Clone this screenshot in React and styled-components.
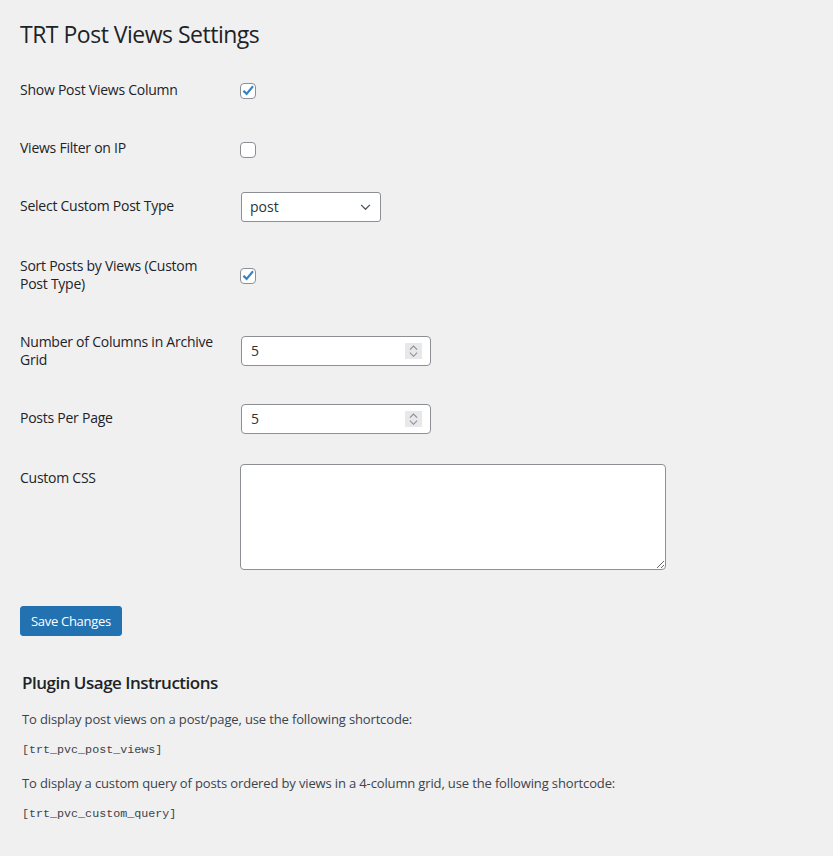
import React from 'react';
import styled, { createGlobalStyle } from 'styled-components';

const GlobalStyle = createGlobalStyle`
  html, body {
    margin: 0;
    padding: 0;
    background: #f0f0f1;
  }
  body {
    color: #1d2327;
    font-family: "Open Sans", "Noto Sans", sans-serif;
    font-size: 13px;
  }
`;

const Wrap = styled.div`
  padding: 11px 20px 30px 20px;
  min-height: 815px;
`;

const Title = styled.h1`
  font-size: 23px;
  font-weight: 400;
  line-height: 1.3;
  margin: 0;
  padding: 9px 0 4px;
  letter-spacing: -0.5px;
`;

const FormTable = styled.div`
  margin-top: 7px;
  display: flex;
  flex-direction: column;
`;

const Row = styled.div`
  display: grid;
  grid-template-columns: 200px 1fr;
  column-gap: 10px;
`;

const Label = styled.div`
  padding: 20px 0;
  font-size: 14px;
  font-weight: 500;
  line-height: 18px;
  letter-spacing: -0.25px;
`;

const Field = styled.div`
  padding: 15px 10px;
  display: flex;
  align-items: ${p => (p.$top ? 'flex-start' : 'center')};
`;

const Box = styled.span`
  width: 16px;
  height: 16px;
  box-sizing: border-box;
  border: 1px solid #8c8f94;
  border-radius: 4px;
  background: #fff;
  display: inline-flex;
  align-items: center;
  justify-content: center;
  margin-top: ${p => p.$shift || 0}px;
`;

const Check = () => (
  <svg width="14" height="14" viewBox="0 0 14 14">
    <path d="M1.6 7.4L3.3 5.9 5.6 8.3 11.2 1.6 12.8 3 5.7 11.4z" fill="#3582c4" />
  </svg>
);

const Checkbox = ({ checked, shift }) => (
  <Box $shift={shift}>{checked && <Check />}</Box>
);

const Select = styled.div`
  width: 140px;
  height: 30px;
  box-sizing: border-box;
  margin-left: 1px;
  border: 1px solid #8c8f94;
  border-radius: 3px;
  background: #fff;
  display: flex;
  align-items: center;
  justify-content: space-between;
  padding: 0 9px 0 8px;
  font-size: 14px;
  color: #2c3338;
`;

const NumberBox = styled.div`
  width: 190px;
  height: 30px;
  box-sizing: border-box;
  margin-left: 1px;
  border: 1px solid #8c8f94;
  border-radius: 4px;
  background: #fff;
  display: flex;
  align-items: center;
  justify-content: space-between;
  padding: 0 8px 0 9px;
  font-size: 14px;
  color: #2c3338;
`;

const Spinner = styled.span`
  width: 17px;
  height: 16px;
  background: #e8e8eb;
  display: flex;
  flex-direction: column;
  align-items: center;
  justify-content: center;
  gap: 2px;
`;

const Chevron = ({ up, size = 9, color = '#8c8f94' }) => (
  <svg width={size} height={size * 0.6} viewBox="0 0 10 6">
    <path
      d={up ? 'M1 5.2L5 1.2l4 4' : 'M1 0.8l4 4 4-4'}
      fill="none"
      stroke={color}
      strokeWidth="1.2"
    />
  </svg>
);

const TextArea = styled.textarea`
  width: 426px;
  height: 106px;
  box-sizing: border-box;
  border: 1px solid #8c8f94;
  border-radius: 4px;
  background: #fff;
  margin: 0;
  padding: 2px 6px;
  font-family: inherit;
`;

const Submit = styled.div`
  margin-top: 21px;
`;

const Button = styled.button`
  background: #2271b1;
  border: 1px solid #2271b1;
  color: #fff;
  border-radius: 3px;
  height: 30px;
  padding: 0 10px;
  font-family: "Open Sans", "Noto Sans", sans-serif;
  font-size: 13px;
  letter-spacing: -0.3px;
`;

const Usage = styled.div`
  margin-top: 36px;
  padding-left: 2px;
`;

const H2 = styled.h2`
  font-size: 17px;
  font-weight: 600;
  line-height: 1.3;
  margin: 0 0 16px;
  letter-spacing: -0.5px;
`;

const P = styled.p`
  font-size: 13px;
  line-height: 19px;
  margin: 0 0 12px;
  color: #3c434a;
  letter-spacing: -0.14px;
`;

const Code = styled(P)`
  font-family: "Liberation Mono", "DejaVu Sans Mono", monospace;
  font-size: 11.7px;
  letter-spacing: 0;
  margin-bottom: 14px;
`;

export default function App() {
  return (
    <>
      <GlobalStyle />
      <Wrap>
        <Title>TRT Post Views Settings</Title>
        <FormTable>
          <Row>
            <Label>Show Post Views Column</Label>
            <Field><Checkbox checked shift={2} /></Field>
          </Row>
          <Row>
            <Label>Views Filter on IP</Label>
            <Field><Checkbox shift={4} /></Field>
          </Row>
          <Row>
            <Label>Select Custom Post Type</Label>
            <Field>
              <Select>
                <span>post</span>
                <Chevron size={11} color="#50575e" />
              </Select>
            </Field>
          </Row>
          <Row>
            <Label>Sort Posts by Views (Custom Post Type)</Label>
            <Field><Checkbox checked shift={2} /></Field>
          </Row>
          <Row>
            <Label>Number of Columns in Archive Grid</Label>
            <Field>
              <NumberBox>
                <span>5</span>
                <Spinner><Chevron up /><Chevron /></Spinner>
              </NumberBox>
            </Field>
          </Row>
          <Row>
            <Label>Posts Per Page</Label>
            <Field>
              <NumberBox>
                <span>5</span>
                <Spinner><Chevron up /><Chevron /></Spinner>
              </NumberBox>
            </Field>
          </Row>
          <Row>
            <Label>Custom CSS</Label>
            <Field $top>
              <TextArea defaultValue="" />
            </Field>
          </Row>
        </FormTable>
        <Submit>
          <Button type="button">Save Changes</Button>
        </Submit>
        <Usage>
          <H2>Plugin Usage Instructions</H2>
          <P>To display post views on a post/page, use the following shortcode:</P>
          <Code>[trt_pvc_post_views]</Code>
          <P>To display a custom query of posts ordered by views in a 4-column grid, use the following shortcode:</P>
          <Code>[trt_pvc_custom_query]</Code>
        </Usage>
      </Wrap>
    </>
  );
}
